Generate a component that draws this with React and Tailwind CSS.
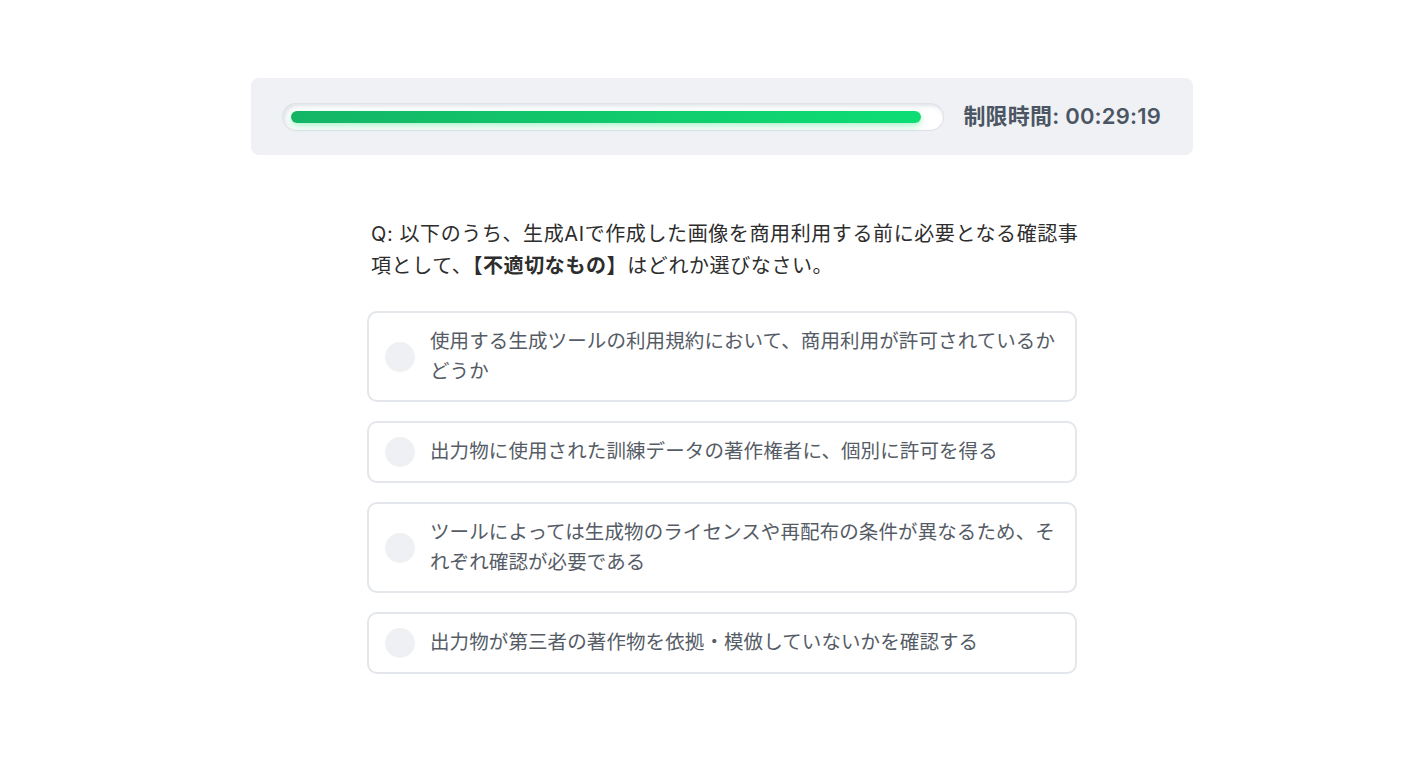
import React from "react";

const options = [
  "使用する生成ツールの利用規約において、商用利用が許可されているかどうか",
  "出力物に使用された訓練データの著作権者に、個別に許可を得る",
  "ツールによっては生成物のライセンスや再配布の条件が異なるため、それぞれ確認が必要である",
  "出力物が第三者の著作物を依拠・模倣していないかを確認する",
];

const ProgressBar = ({ percent }) => (
  <div className="flex-1 h-[26px] rounded-full bg-white px-[8px] flex items-center shadow-[inset_2px_2px_4px_rgba(180,188,200,0.45),0_0_0_1px_rgba(220,224,230,0.9)]">
    <div
      className="h-[12px] rounded-full bg-gradient-to-r from-[#13b565] to-[#0ddd74] shadow-[0_3px_6px_rgba(16,220,110,0.35)]"
      style={{ width: `${percent}%` }}
    />
  </div>
);

const Option = ({ text }) => (
  <button className="w-full flex items-center gap-[15px] border-2 border-[#e3e6ea] rounded-[10px] bg-white pl-[16px] pr-[16px] py-[14px] text-left">
    <span className="w-[30px] h-[30px] rounded-full bg-[#eef0f3] shrink-0" />
    <span className="text-[19.5px] leading-[29.5px] tracking-[0.1px] text-[#555c66]">{text}</span>
  </button>
);

export default function App() {
  return (
    <div
      className="min-h-screen bg-white pt-[78px]"
      style={{ fontFamily: 'Inter, "Noto Sans CJK JP", sans-serif' }}
    >
      <div className="w-[942px] ml-[251px]">
        <div className="h-[77px] bg-[#eff1f5] rounded-[8px] px-[32px] flex items-center gap-[20px]">
          <ProgressBar percent={97.7} />
          <span className="text-[22px] font-semibold text-[#4b5563] tracking-[0.2px]">
            制限時間: 00:29:19
          </span>
        </div>

        <div className="w-[710px] mx-auto mt-[63px]">
          <p className="w-[718px] pl-[4px] text-[20px] leading-[32px] tracking-[0.6px] text-[#2d2d2d]">
            Q: 以下のうち、生成AIで作成した画像を商用利用する前に必要となる確認事項として、
            <span className="font-bold">【不適切なもの】</span>
            はどれか選びなさい。
          </p>
          <div className="mt-[29px] flex flex-col gap-[19px]">
            {options.map((o, i) => (
              <Option key={i} text={o} />
            ))}
          </div>
        </div>
      </div>
    </div>
  );
}
